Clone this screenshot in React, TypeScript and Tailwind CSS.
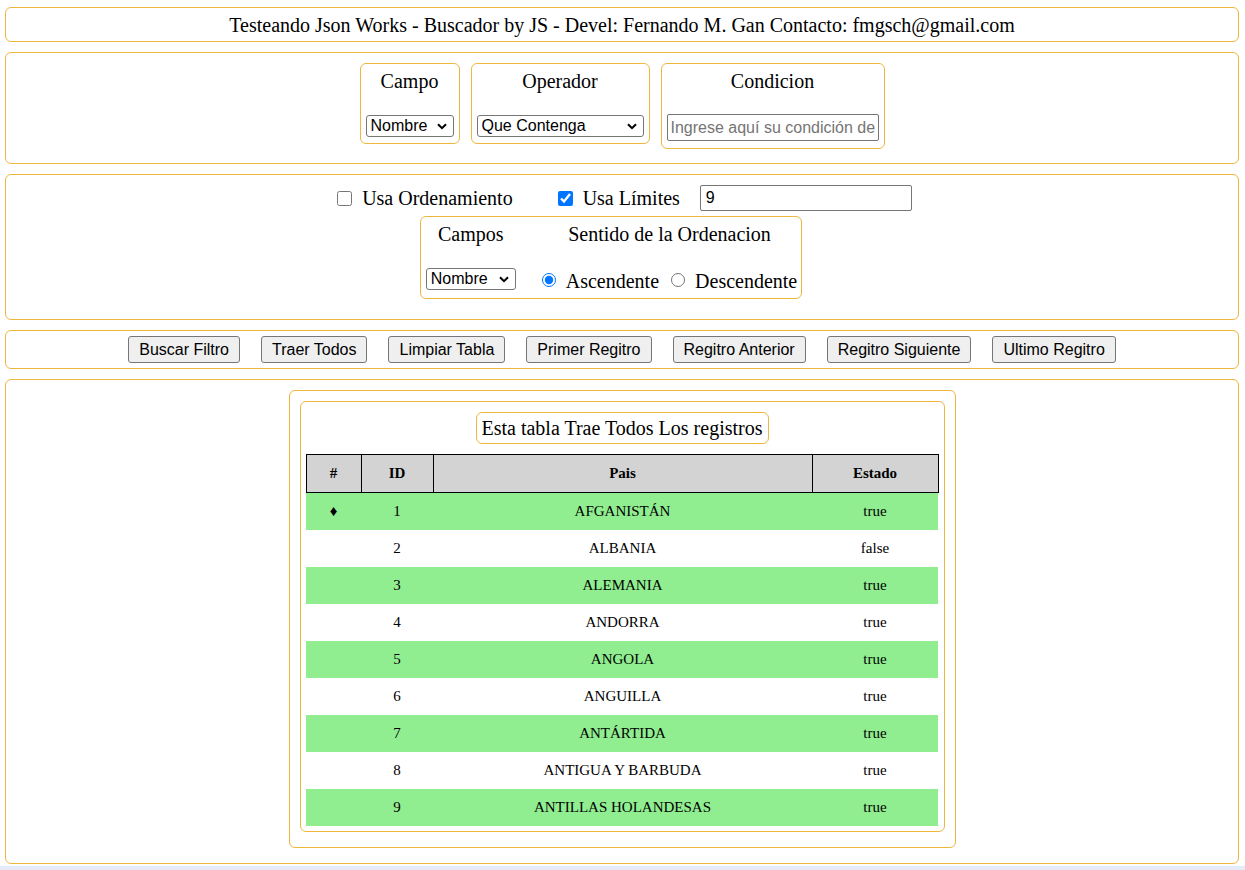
import React from "react";

const serif = "font-['Liberation_Serif','Times_New_Roman',serif]";
const sans = "font-['Liberation_Sans',Arial,sans-serif]";
const box = "mx-[5px] mr-[6px] border border-[#efb73e] rounded-[6px] bg-white";
const fieldset = "border border-[#efb73e] rounded-[6px]";

const paises = [
  { id: 1, nombre: "AFGANISTÁN", estado: "true" },
  { id: 2, nombre: "ALBANIA", estado: "false" },
  { id: 3, nombre: "ALEMANIA", estado: "true" },
  { id: 4, nombre: "ANDORRA", estado: "true" },
  { id: 5, nombre: "ANGOLA", estado: "true" },
  { id: 6, nombre: "ANGUILLA", estado: "true" },
  { id: 7, nombre: "ANTÁRTIDA", estado: "true" },
  { id: 8, nombre: "ANTIGUA Y BARBUDA", estado: "true" },
  { id: 9, nombre: "ANTILLAS HOLANDESAS", estado: "true" },
];

const botones = [
  "Buscar Filtro",
  "Traer Todos",
  "Limpiar Tabla",
  "Primer Regitro",
  "Regitro Anterior",
  "Regitro Siguiente",
  "Ultimo Regitro",
];

// select nativo sin apariencia, con la flechita dibujada encima
function Select({ options, className }: { options: string[]; className: string }) {
  return (
    <div className={`relative h-[22px] ${className}`}>
      <select
        className={`block appearance-none w-full h-full border border-[#767676] rounded-[3px] bg-white pl-[4px] pr-[20px] text-[16px] leading-[18px] text-black ${sans}`}
        defaultValue={options[0]}
      >
        {options.map((o) => (
          <option key={o}>{o}</option>
        ))}
      </select>
      <svg
        width="10"
        height="7"
        viewBox="0 0 10 7"
        className="pointer-events-none absolute right-[7px] top-[8px]"
      >
        <path d="M1 1.2 L5 5.2 L9 1.2" fill="none" stroke="#000" strokeWidth="2" />
      </svg>
    </div>
  );
}

export default function App() {
  return (
    <div className={`min-h-[870px] bg-white text-black ${serif}`}>
      <div className="flex flex-col gap-[10px] pt-[7px]">
        {/* Encabezado */}
        <div className={`${box} h-[35px] flex items-center justify-center text-[20px]`}>
          Testeando Json Works - Buscador by JS - Devel: Fernando M. Gan Contacto: fmgsch@gmail.com
        </div>

        {/* Filtro */}
        <div className={`${box} h-[112px] pt-[10px] flex justify-center items-start gap-[11px]`}>
          <div className={`${fieldset} w-[100px] h-[81px] pt-[6px] flex flex-col items-center`}>
            <div className="text-[20px] leading-[22px]">Campo</div>
            <Select options={["Nombre", "ID", "Estado"]} className="w-[88px] mt-[23px]" />
          </div>
          <div className={`${fieldset} w-[179px] h-[81px] pt-[6px] flex flex-col items-center`}>
            <div className="text-[20px] leading-[22px]">Operador</div>
            <Select
              options={["Que Contenga", "Igual a", "Empiece con", "Termine con"]}
              className="w-[167px] mt-[23px]"
            />
          </div>
          <div className={`${fieldset} w-[224px] h-[86px] pt-[6px] flex flex-col items-center`}>
            <div className="text-[20px] leading-[22px]">Condicion</div>
            <input
              type="text"
              placeholder="Ingrese aquí su condición de búsqueda"
              className={`mt-[22px] w-[212px] h-[27px] border border-[#767676] rounded-[2px] px-[3px] text-[16px] placeholder:text-[#757575] ${sans}`}
            />
          </div>
        </div>

        {/* Ordenamiento y limites */}
        <div className={`${box} h-[146px] pt-[10px] flex flex-col items-center`}>
          <div className="h-[26px] ml-[5px] flex items-center text-[20px]">
            <input type="checkbox" className="w-[15px] h-[15px] mr-[10px]" />
            <span>Usa Ordenamiento</span>
            <input type="checkbox" defaultChecked className="w-[15px] h-[15px] ml-[45px] mr-[10px]" />
            <span>Usa Límites</span>
            <input
              type="text"
              defaultValue="9"
              className={`ml-[20px] w-[212px] h-[26px] border border-[#767676] rounded-[2px] px-[5px] text-[16px] ${sans}`}
            />
          </div>
          <div className={`${fieldset} mt-[5px] mr-[22px] h-[83px] pt-[6px] pl-[5px] pr-[4px] flex gap-[26px] text-[20px]`}>
            <div className="flex flex-col items-center">
              <div className="leading-[22px]">Campos</div>
              <Select options={["Nombre", "ID", "Estado"]} className="w-[90px] mt-[23px]" />
            </div>
            <div className="flex flex-col items-center">
              <div className="leading-[22px]">Sentido de la Ordenacion</div>
              <div className="mt-[25px] h-[22px] flex items-center">
                <input type="radio" name="orden" defaultChecked className="w-[14px] h-[14px] mr-[10px] -mt-[2px]" />
                <span className="leading-[22px]">Ascendente</span>
                <input type="radio" name="orden" className="w-[14px] h-[14px] ml-[12px] mr-[10px] -mt-[2px]" />
                <span className="leading-[22px]">Descendente</span>
              </div>
            </div>
          </div>
        </div>

        {/* Botones */}
        <div className={`${box} h-[39px] flex items-center justify-center gap-[21px]`}>
          {botones.map((b) => (
            <button
              key={b}
              className={`h-[27px] px-[10px] border border-[#767676] rounded-[3px] bg-[#efefef] text-[16px] leading-[18px] ${sans}`}
            >
              {b}
            </button>
          ))}
        </div>

        {/* Tabla */}
        <div className={`${box} h-[485px] pt-[10px] flex justify-center items-start`}>
          <div className={`${fieldset} w-[667px] h-[458px] p-[10px]`}>
            <div className={`${fieldset} h-[431px] pt-[10px] px-[5px] flex flex-col items-center`}>
              <div className={`${fieldset} h-[32px] px-[5px] flex items-center text-[20px]`}>
                Esta tabla Trae Todos Los registros
              </div>
              <table className="mt-[10px] w-full table-fixed border-collapse text-[15px]">
                <thead>
                  <tr className="h-[38px] bg-[#d3d3d3]">
                    <th className="w-[55px] border border-black font-bold">#</th>
                    <th className="w-[72px] border border-black font-bold">ID</th>
                    <th className="w-[379px] border border-black font-bold">Pais</th>
                    <th className="w-[126px] border border-black font-bold">Estado</th>
                  </tr>
                </thead>
                <tbody>
                  {paises.map((p, i) => (
                    <tr key={p.id} className={`h-[37px] ${i % 2 === 0 ? "bg-[#90ee90]" : "bg-white"}`}>
                      <td className="text-center">{i === 0 ? "♦" : ""}</td>
                      <td className="text-center">{p.id}</td>
                      <td className="text-center">{p.nombre}</td>
                      <td className="text-center">{p.estado}</td>
                    </tr>
                  ))}
                </tbody>
              </table>
            </div>
          </div>
        </div>
      </div>
      <div className="mt-[2px] h-[10px] bg-[#e5ecf7]" />
    </div>
  );
}
